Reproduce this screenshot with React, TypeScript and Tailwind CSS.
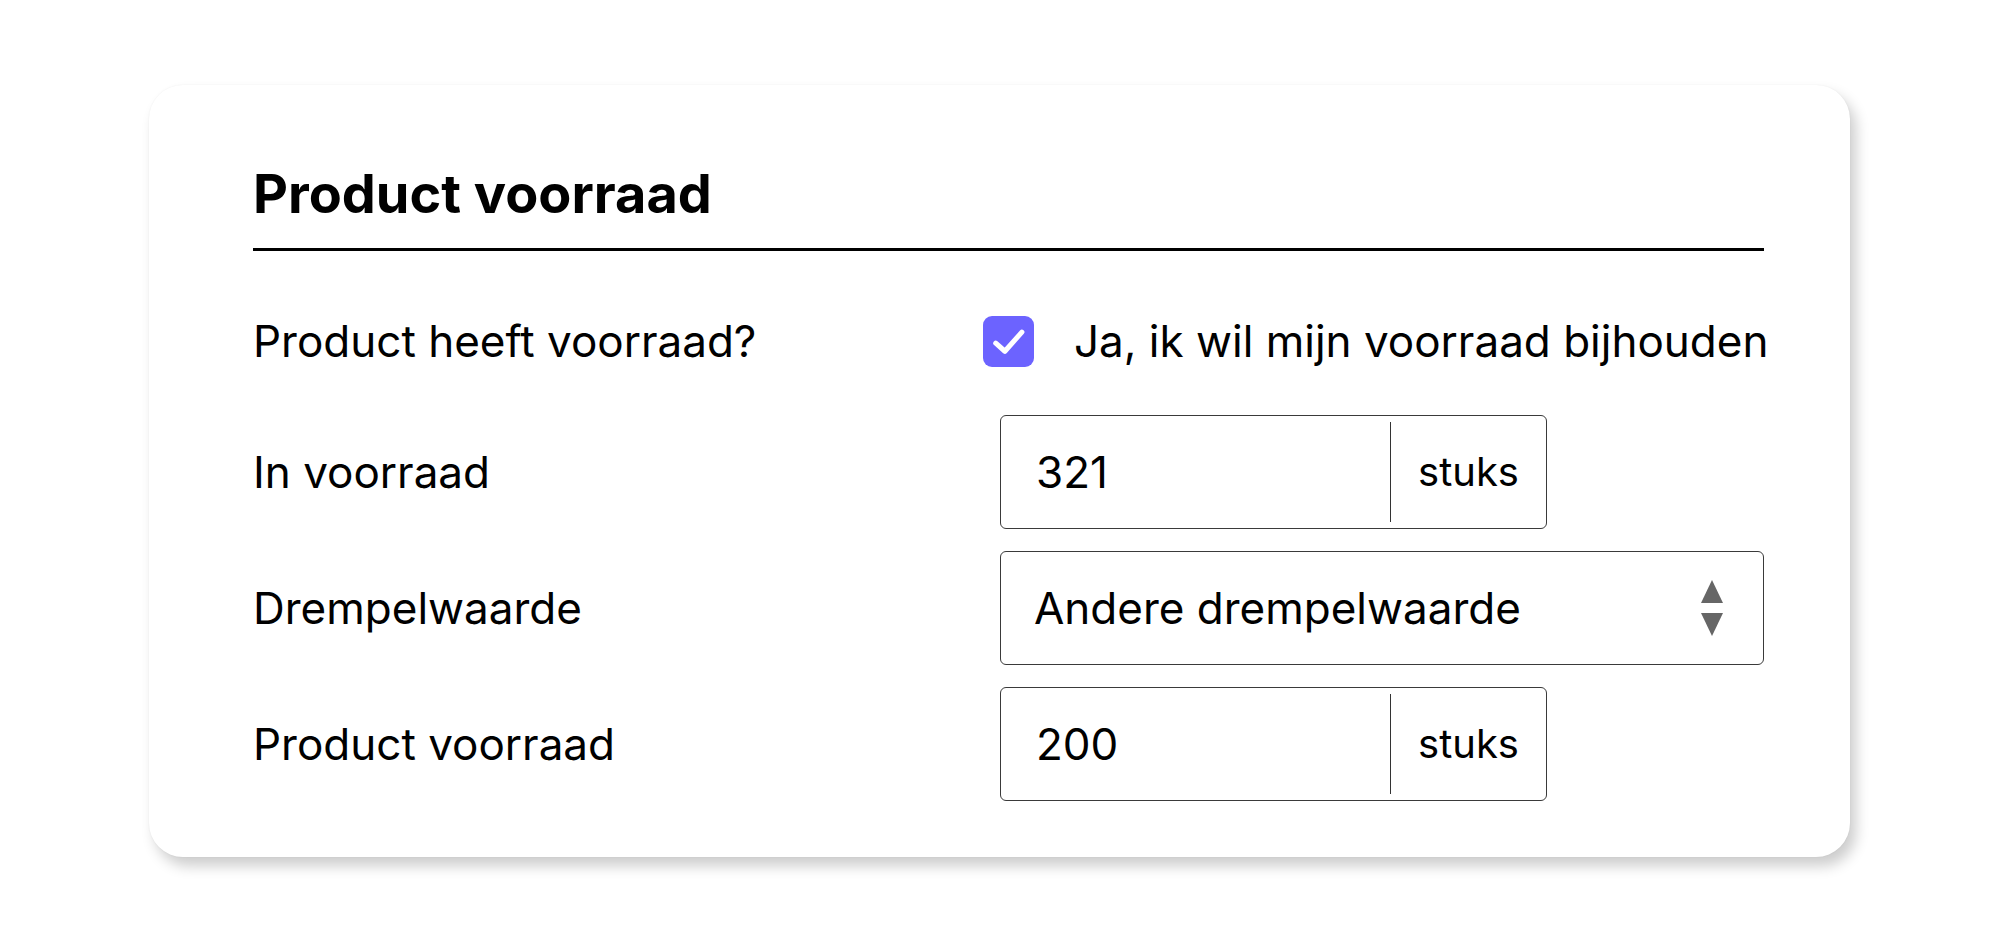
import React from 'react';

const font = { fontFamily: 'Inter, "Noto Sans", sans-serif' };

const UnitInput: React.FC<{ value: string; unit: string }> = ({ value, unit }) => (
  <div className="flex h-[114px] w-[547px] items-stretch rounded-[6px] border-[1.5px] border-[#3a3a3a]">
    <div className="flex flex-1 items-center pl-[35px] text-[44px] text-black">{value}</div>
    <div className="my-[6px] w-[1.5px] bg-[#333]" />
    <div className="flex w-[155px] items-center justify-center text-[40px] text-black">{unit}</div>
  </div>
);

const Row: React.FC<{ label: string; children: React.ReactNode }> = ({ label, children }) => (
  <div className="grid h-[114px] grid-cols-[747px_1fr] items-center">
    <span className="text-[44px] leading-[53px] text-black">{label}</span>
    <div className="flex items-center">{children}</div>
  </div>
);

export default function App() {
  return (
    <div className="min-h-screen bg-white pl-[149px] pt-[85px]" style={font}>
      <div className="flex h-[772px] w-[1701px] flex-col rounded-[34px] bg-white pb-[53px] pl-[104px] pr-[86px] pt-[77px] shadow-[0_0_2px_rgba(0,0,0,0.06),6px_9px_14px_rgba(0,0,0,0.2)]">
        <h2 className="text-[54px] font-bold leading-[64px] text-black">Product voorraad</h2>
        <div className="mt-[22px] h-[3px] w-full bg-black" />

        <div className="mt-[38px] flex flex-col gap-[22px]">
          <div className="grid h-[104px] grid-cols-[747px_1fr] items-center">
            <span className="text-[44px] leading-[53px] text-black">Product heeft voorraad?</span>
            <label className="-ml-[17px] flex items-center gap-[40px]">
              <span className="flex h-[51px] w-[51px] items-center justify-center rounded-[9px] bg-[#6c63ff]">
                <svg viewBox="0 0 24 24" className="h-[51px] w-[51px]" fill="none" stroke="white" strokeWidth="2.4" strokeLinecap="round" strokeLinejoin="round">
                  <polyline points="6,12.8 10.3,16.6 18.3,7.6" />
                </svg>
              </span>
              <span className="whitespace-nowrap text-[44px] leading-[53px] text-black">Ja, ik wil mijn voorraad bijhouden</span>
            </label>
          </div>

          <Row label="In voorraad">
            <UnitInput value="321" unit="stuks" />
          </Row>

          <Row label="Drempelwaarde">
            <div className="flex h-[114px] w-full items-center justify-between rounded-[6px] border-[1.5px] border-[#3a3a3a] pl-[33px] pr-[40px]">
              <span className="text-[44px] text-black">Andere drempelwaarde</span>
              <svg viewBox="0 0 22 56" className="h-[56px] w-[22px]" fill="#666">
                <polygon points="11,0 22,23 0,23" />
                <polygon points="0,33 22,33 11,56" />
              </svg>
            </div>
          </Row>

          <Row label="Product voorraad">
            <UnitInput value="200" unit="stuks" />
          </Row>
        </div>
      </div>
    </div>
  );
}
